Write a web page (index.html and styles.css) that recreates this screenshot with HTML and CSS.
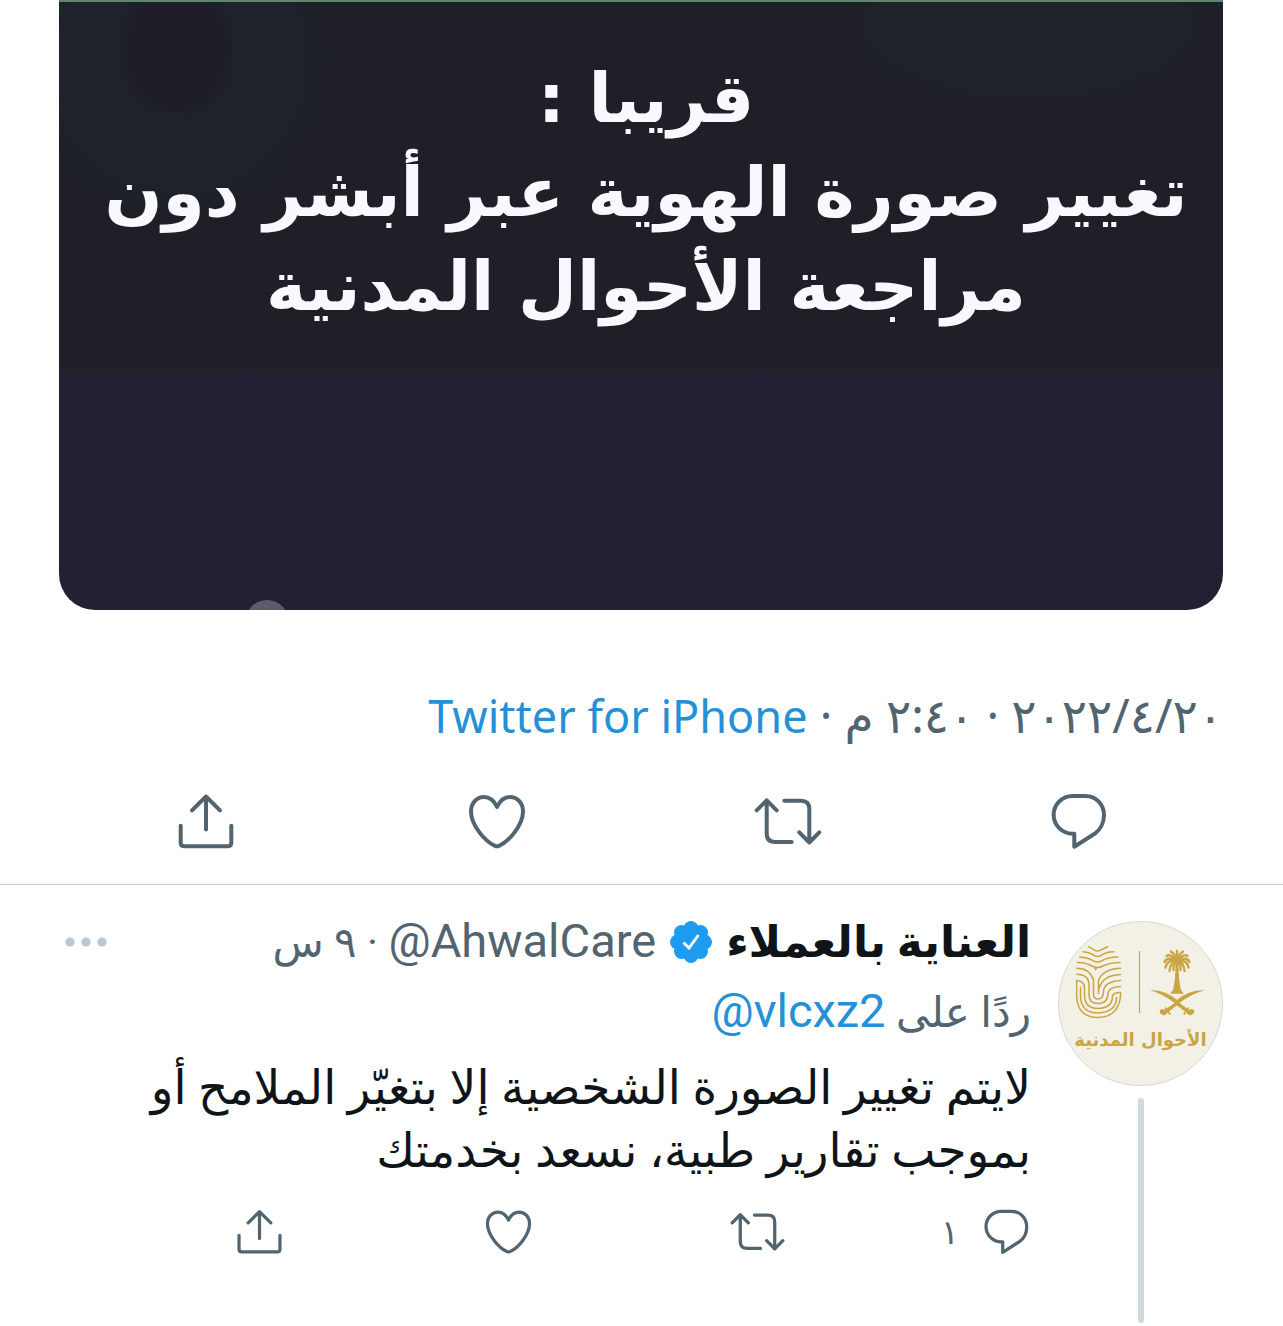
FILE: index.html
```html
<!DOCTYPE html>
<html lang="ar" dir="rtl">
<head>
<meta charset="utf-8">
<meta name="viewport" content="width=device-width, initial-scale=1">
<title>تغريدة</title>
<link rel="stylesheet" href="styles.css">
</head>
<body>
<svg class="sprite" aria-hidden="true">
  <symbol id="reply" viewBox="0 0 68 68"><path d="M29.3 46.7H27.5A18.85 18.85 0 0 1 27.5 9H40.5C51 9 59 17.5 59 28C59 36 55 43 50 46.5L29.3 59.7Z"/></symbol>
  <symbol id="retweet" viewBox="0 0 68 68"><path d="M2.7 23.3L12.7 13.3L22.7 23.3M12.7 13.3V46.5Q12.7 55 21.2 55H37.7M30.3 13.7H47Q55.3 13.7 55.3 22V55.5M45.3 45.3L55.3 55.5L65.3 45.3"/></symbol>
  <symbol id="like" viewBox="0 0 68 68"><path d="M34 20C31 13.5 26.5 10 21 10C13.5 10 8 16 8 24.5C8 38 22 54.5 32 58.8Q34 59.6 36 58.8C46 54.5 60 38 60 24.5C60 16 54.5 10 47 10C41.5 10 37 13.5 34 20Z"/></symbol>
  <symbol id="share" viewBox="0 0 68 68"><path d="M20 23.3L34 9.5L48 23.3M34 10V42.5M8.7 38.7V56Q8.7 59.2 12 59.2H56Q59.3 59.2 59.3 56V38.7"/></symbol>
</svg>
<main>
  <article class="tweet">
    <div class="media">
      <p class="caption">قريبا :<br>تغيير صورة الهوية عبر أبشر دون<br>مراجعة الأحوال المدنية</p>
      <span class="media-mark"></span>
    </div>
    <p class="meta"><bdi dir="ltr">٢٠٢٢/٤/٢٠</bdi> · <span>٢:٤٠ م</span> · <a href="#"><bdi>Twitter for iPhone</bdi></a></p>
    <div class="actions">
      <button type="button" aria-label="رد"><svg class="icon"><use href="#reply"/></svg></button>
      <button type="button" aria-label="إعادة تغريد"><svg class="icon"><use href="#retweet"/></svg></button>
      <button type="button" aria-label="إعجاب"><svg class="icon"><use href="#like"/></svg></button>
      <button type="button" aria-label="مشاركة"><svg class="icon"><use href="#share"/></svg></button>
    </div>
  </article>
  <article class="reply">
    <div class="rail">
      <svg class="avatar" viewBox="0 0 165 165" role="img" aria-label="الأحوال المدنية">
        <circle cx="82.500" cy="82.500" r="82" fill="#f3f1e5" stroke="#d6d8d5"/>
        <path d="M81.500 30V92" stroke="#caa545" stroke-width="1.200"/>
        <g fill="none" stroke="#caa545" stroke-width="1.500" stroke-linecap="round" stroke-linejoin="round">
          <path d="M30.500 25.700L36 28.800Q39.500 31 43 28.800L49.700 25.700"/>
          <path d="M25 30.700Q32 31.300 36 34.300Q39.500 36.700 43 34.300Q48 31 55.700 30.700"/>
          <path d="M21.500 36Q30 36.500 35 39.700Q39.500 42.500 44 39.700Q50 36 60 36"/>
          <path d="M19.500 41.500Q28 41.500 34 45Q39.500 48 45 45Q52 41.500 62 41.500"/>
          <path d="M18.700 47.300Q32 47.500 35.500 59V73Q35.500 78 40 78Q45.500 78 45.500 70.500Q46 60.500 62.500 59.500"/>
          <path d="M18.700 53.300Q31 53.500 31 64V74Q31 82.500 40 82.500Q50 82.500 50 72Q51 66 62.500 65.500"/>
          <path d="M18.700 59.500Q26.500 60 26.500 67V75Q27 87.500 40 87.500Q54.500 87 54.500 75Q55.500 71.500 62.500 71.500"/>
          <path d="M22.500 66V76Q23.500 92 40 92Q58.500 91 58.500 76.500"/>
          <path d="M18.700 59.500V76Q20 96.500 40 96.500Q61.500 96 62.700 72.500"/>
          <path d="M62.500 47.300Q45 48 40.500 59.500V72.500M62.500 53.500Q49 54 44 61.500Q40.500 66 40.500 72.500"/>
        </g>
        <path d="M35.700 46.500H39.500L37.600 49.800Z" fill="#caa545"/>
        <g fill="#caa545">
          <path d="M117.500 42H120.500Q120.500 60 123 69L126 72.700H112L115 69Q117.500 60 117.500 42Z"/>
          <path d="M92 69.300Q107 68.500 119 79Q131 68.500 147 69.300Q134 72.500 121.500 82L132 89.500Q135.500 91 136 88Q137 91.500 133.500 94Q130.500 95 128.500 91.500L118.800 84.500L109.500 91.500Q107.500 95 104.500 94Q101 91.500 102 88Q102.500 91 106 89.500L116.500 82Q104 72.500 92 69.300Z"/>
          <circle cx="104.500" cy="90.500" r="2.600"/><circle cx="133.500" cy="90.500" r="2.600"/>
          <path d="M107.500 86L113 93L111.500 94L106.500 87ZM130.500 86L125 93L126.500 94L131.500 87Z"/>
        </g>
        <g fill="none" stroke="#caa545" stroke-width="2.400" stroke-linecap="round">
          <path d="M119 40V30M119 40Q117 33 113 30.500M119 40Q121 33 125 30.500M119 40Q112 32 108.500 35M119 40Q126 32 129.500 35M119 40Q109 35 106.500 41M119 40Q129 35 131.500 41M119 40Q109 38 107.500 46.500M119 40Q129 38 130.500 46.500M119 40Q112 41 111.500 50M119 40Q126 41 126.500 50M119 40Q115 43 115.500 49M119 40Q123 43 122.500 49"/>
        </g>
        <text class="avatar-name" x="82.500" y="125" text-anchor="middle">الأحوال المدنية</text>
      </svg>
      <span class="thread-line"></span>
    </div>
    <div class="content">
      <header class="head">
        <strong class="name">العناية بالعملاء</strong>
        <svg class="badge" viewBox="0 0 42 42" role="img" aria-label="حساب موثق"><g fill="#1d9bf0"><circle cx="21" cy="21" r="17.500"/><circle cx="21" cy="7.500" r="7.500"/><circle cx="30.500" cy="11.500" r="7.500"/><circle cx="34.500" cy="21" r="7.500"/><circle cx="30.500" cy="30.500" r="7.500"/><circle cx="21" cy="34.500" r="7.500"/><circle cx="11.500" cy="30.500" r="7.500"/><circle cx="7.500" cy="21" r="7.500"/><circle cx="11.500" cy="11.500" r="7.500"/></g><path d="M13.500 21.500L19 27L28.500 14" fill="none" stroke="#fff" stroke-width="2.800"/></svg>
        <span class="handle"><bdi class="latin">@AhwalCare</bdi> · ٩ س</span>
        <button type="button" class="more" aria-label="المزيد"><svg viewBox="0 0 42 10"><circle cx="5" cy="5" r="4.600"/><circle cx="21" cy="5" r="4.600"/><circle cx="37" cy="5" r="4.600"/></svg></button>
      </header>
      <p class="context">ردًا على <a href="#"><bdi class="latin">@vlcxz2</bdi></a></p>
      <p class="text">لايتم تغيير الصورة الشخصية إلا بتغيّر الملامح أو<br>بموجب تقارير طبية، نسعد بخدمتك</p>
      <div class="actions actions-small">
        <button type="button" aria-label="رد"><svg class="icon"><use href="#reply"/></svg><span>١</span></button>
        <button type="button" aria-label="إعادة تغريد"><svg class="icon"><use href="#retweet"/></svg></button>
        <button type="button" aria-label="إعجاب"><svg class="icon"><use href="#like"/></svg></button>
        <button type="button" aria-label="مشاركة"><svg class="icon"><use href="#share"/></svg></button>
      </div>
    </div>
  </article>
</main>
</body>
</html>
```
FILE: styles.css
```css
* { box-sizing: border-box; }
body {
  margin: 0;
  background: #fff;
  color: #0f1419;
  font-family: Roboto, "DejaVu Sans", sans-serif;
}
p { margin: 0; }
a { color: #2490d8; text-decoration: none; }
button {
  padding: 0;
  border: 0;
  background: none;
  color: inherit;
  font: inherit;
  cursor: pointer;
}
.sprite { position: absolute; width: 0; height: 0; }
.media {
  position: relative;
  margin: 0 60px 0 59px;
  min-height: 610px;
  padding: 50px 0 0 10px;
  overflow: hidden;
  border-top: 2px solid #62856f;
  border-radius: 0 0 36px 36px;
  background:
    radial-gradient(ellipse 62px 70px at 118px 48px, #1f1e28 80%, transparent),
    radial-gradient(circle 150px at 118px 60px, #1e222a 80%, transparent),
    radial-gradient(ellipse 180px 80px at 970px 20px, #1f2329 80%, transparent),
    linear-gradient(#1f2027 367px, #222133 371px);
}
.caption {
  color: #f8f8ff;
  font: bold 68px/94px "DejaVu Sans", sans-serif;
  text-align: center;
  white-space: nowrap;
}
.media-mark {
  position: absolute;
  bottom: -30px;
  left: 187px;
  width: 42px;
  height: 40px;
  border-radius: 50%;
  background: #5c5b69;
}
.meta {
  margin: 75px 60px 0;
  color: #536471;
  font: 47px/60px "Noto Sans", "DejaVu Sans", sans-serif;
}
.meta a { font-size: 45px; }
.actions {
  display: grid;
  grid-template-columns: repeat(4, 1fr);
  margin: 41px 59px 29px 61px;
  color: #536471;
}
.actions button {
  display: flex;
  align-items: center;
  justify-content: center;
}
.icon {
  width: 68px;
  height: 68px;
  fill: none;
  stroke: currentColor;
  stroke-width: 4;
  stroke-linecap: round;
  stroke-linejoin: round;
}
.reply {
  display: flex;
  gap: 27px;
  min-height: 443px;
  padding: 36px 60px 4px 59px;
  border-top: 1px solid #c9cdd0;
}
.rail {
  display: flex;
  flex: none;
  flex-direction: column;
  align-items: center;
  gap: 12px;
}
.avatar { width: 165px; height: 165px; }
.avatar-name {
  fill: #caa545;
  font: bold 18px "DejaVu Sans", sans-serif;
}
.thread-line {
  flex: 1;
  width: 6px;
  border-radius: 3px;
  background: #cfd9de;
}
.content { flex: 1; min-width: 0; }
.head {
  display: flex;
  align-items: center;
  gap: 14px;
  height: 42px;
  line-height: 42px;
  white-space: nowrap;
}
.name { font-size: 44px; }
.badge { flex: none; width: 42px; height: 42px; }
.handle { color: #536471; font-size: 42px; }
.latin { font-size: 47px; }
.more { margin-right: auto; margin-left: 6px; }
.more svg { display: block; width: 42px; height: 10px; fill: #b9c8d2; }
.context {
  margin-top: 18px;
  color: #536471;
  font-size: 42px;
  line-height: 60px;
}
.text {
  margin-top: 13px;
  font-size: 47px;
  line-height: 63px;
  white-space: nowrap;
}
.actions-small { margin: 22px -3px 0 -21px; }
.actions-small button { justify-content: flex-start; }
.actions-small .icon { width: 55px; height: 55px; }
.actions-small span { margin-right: 20px; font-size: 34px; }
```
